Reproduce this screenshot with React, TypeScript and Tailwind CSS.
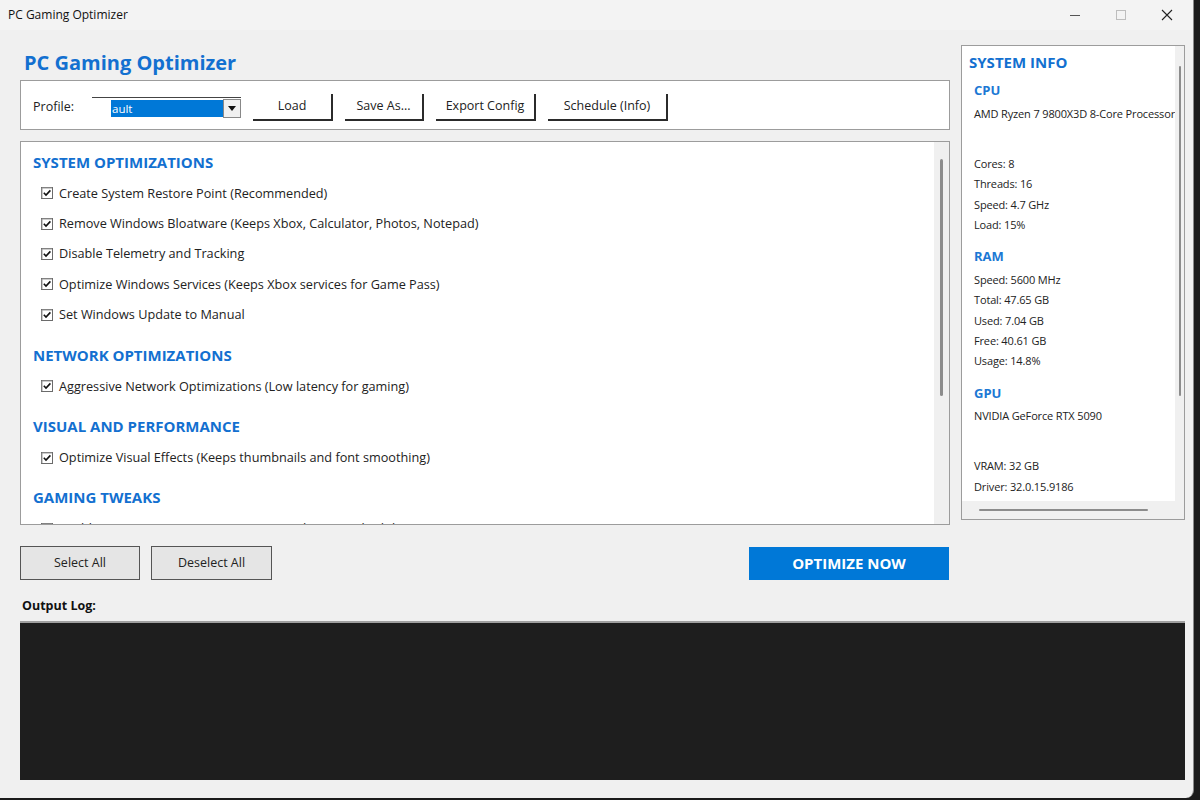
import React from "react";

const font = { fontFamily: '"Open Sans", "Noto Sans", sans-serif' };

type Section = { title: string; items: string[] };

const sections: Section[] = [
  {
    title: "SYSTEM OPTIMIZATIONS",
    items: [
      "Create System Restore Point (Recommended)",
      "Remove Windows Bloatware (Keeps Xbox, Calculator, Photos, Notepad)",
      "Disable Telemetry and Tracking",
      "Optimize Windows Services (Keeps Xbox services for Game Pass)",
      "Set Windows Update to Manual",
    ],
  },
  {
    title: "NETWORK OPTIMIZATIONS",
    items: ["Aggressive Network Optimizations (Low latency for gaming)"],
  },
  {
    title: "VISUAL AND PERFORMANCE",
    items: ["Optimize Visual Effects (Keeps thumbnails and font smoothing)"],
  },
  {
    title: "GAMING TWEAKS",
    items: ["Enable Gaming Optimizations (Game Mode, GPU scheduling, priority)"],
  },
];

function CheckBox({ checked = true }: { checked?: boolean }) {
  return (
    <svg width="12" height="12" viewBox="0 0 12 12" className="shrink-0">
      <rect x="0.5" y="0.5" width="11" height="11" fill="#fff" stroke="#6b6b6b" />
      <path d="M1 1 H11 M1 1 V11" stroke="#9a9a9a" />
      {checked && <path d="M2.8 5.8 L5 8.1 L9.4 3.4" fill="none" stroke="#111" strokeWidth="1.6" />}
    </svg>
  );
}

function ToolButton({ label, w }: { label: string; w: string }) {
  return (
    <button
      className={`${w} h-[27px] bg-white border-r-2 border-b-2 border-[#2b2b2b] text-[12.5px] text-[#222] flex items-center justify-center`}
    >
      {label}
    </button>
  );
}

function InfoHead({ children }: { children: React.ReactNode }) {
  return <div className="text-[13px] font-bold text-[#1c78d4] h-[20px] leading-[20px]">{children}</div>;
}

function InfoLine({ children }: { children?: React.ReactNode }) {
  return (
    <div className="text-[11px] tracking-[-0.15px] text-[#222] h-[20.3px] leading-[20px] whitespace-nowrap">
      {children}
    </div>
  );
}

export default function App() {
  return (
    <div className="w-[1200px] h-[800px] bg-[#1b1b1b] flex" style={font}>
      <div className="w-[1194px] h-[798px] bg-[#f0f0f0] rounded-br-lg flex flex-col border-r border-[#8a8a8a]">
        {/* title bar */}
        <div className="h-[30px] bg-[#f3f3f3] flex items-center pl-2">
          <span className="text-[12px] text-[#111]">PC Gaming Optimizer</span>
          <div className="ml-auto flex items-center h-full">
            <div className="w-[46px] h-full flex items-center justify-center">
              <div className="w-[10px] h-px bg-[#555]" />
            </div>
            <div className="w-[46px] h-full flex items-center justify-center">
              <div className="w-[10px] h-[10px] border border-[#bdbdbd]" />
            </div>
            <div className="w-[46px] h-full flex items-center justify-center mr-[3px]">
              <svg width="12" height="12" viewBox="0 0 12 12">
                <path d="M1 1 L11 11 M11 1 L1 11" stroke="#222" strokeWidth="1.1" />
              </svg>
            </div>
          </div>
        </div>

        <div className="pl-[20px] pt-[15px] flex flex-col">
          <div className="flex gap-[11px]">
            {/* left column */}
            <div className="w-[930px] flex flex-col">
              <div className="h-[35px] flex items-center pl-[4px]">
                <h1 className="text-[20px] font-bold text-[#1370d0] leading-none">PC Gaming Optimizer</h1>
              </div>
              <div className="h-[50px] bg-white border border-[#9c9c9c] flex items-center pl-[12px] pt-[5px] gap-[12px]">
                <span className="text-[12.5px] text-[#222] w-[47px]">Profile:</span>
                <div className="w-[149px] h-[21px] border-t border-[#444] flex items-center">
                  <div className="w-[19px]" />
                  <div className="flex-1 h-[17px] bg-[#0078d7] text-white text-[11.5px] leading-[17px] pl-px">ault</div>
                  <div className="w-[18px] h-[19px] border border-[#888] bg-[#f0f0f0] flex items-center justify-center">
                    <svg width="8" height="5" viewBox="0 0 8 5">
                      <path d="M0 0 H8 L4 5 Z" fill="#111" />
                    </svg>
                  </div>
                </div>
                <ToolButton label="Load" w="w-[80px]" />
                <ToolButton label="Save As..." w="w-[79px]" />
                <ToolButton label="Export Config" w="w-[100px]" />
                <ToolButton label="Schedule (Info)" w="w-[120px]" />
              </div>

              {/* options list */}
              <div className="mt-[11px] h-[384px] bg-white border border-[#9c9c9c] flex overflow-hidden">
                <div className="flex-1 pl-[12px] pt-[8px] overflow-hidden">
                  {sections.map((s, i) => (
                    <div key={s.title} className={i === 0 ? "" : "mt-[13px]"}>
                      <div className="h-[24px] flex items-center text-[15px] font-bold text-[#1370d0]">{s.title}</div>
                      {s.items.map((item, j) => (
                        <div key={item} className={`h-[30.4px] flex items-center gap-[6px] pl-[8px] ${j === 0 ? "mt-[4px]" : ""}`}>
                          <CheckBox checked={s.title !== "GAMING TWEAKS"} />
                          <span className="text-[12.7px] text-[#222] whitespace-nowrap">{item}</span>
                        </div>
                      ))}
                    </div>
                  ))}
                </div>
                <div className="w-[15px] bg-[#f0f0f0] flex justify-center pt-[17px]">
                  <div className="w-[3px] h-[237px] bg-[#8c8c8c] rounded-full" />
                </div>
              </div>
            </div>

            {/* system info */}
            <div className="w-[224px] h-[475px] bg-white border border-[#9c9c9c] flex flex-col overflow-hidden">
              <div className="flex flex-1 overflow-hidden">
                <div className="flex-1 overflow-hidden pl-[7px] pt-[5px]">
                  <div className="text-[15px] font-bold text-[#1370d0] h-[22px] leading-[22px]">SYSTEM INFO</div>
                  <div className="pl-[5px] pt-[7px]">
                    <InfoHead>CPU</InfoHead>
                    <div className="mt-[4px]">
                      <InfoLine>AMD Ryzen 7 9800X3D 8-Core Processor</InfoLine>
                      <div className="h-[29.7px]" />
                      <InfoLine>Cores: 8</InfoLine>
                      <InfoLine>Threads: 16</InfoLine>
                      <InfoLine>Speed: 4.7 GHz</InfoLine>
                      <InfoLine>Load: 15%</InfoLine>
                    </div>
                    <div className="mt-[11px]">
                      <InfoHead>RAM</InfoHead>
                    </div>
                    <div className="mt-[4px]">
                      <InfoLine>Speed: 5600 MHz</InfoLine>
                      <InfoLine>Total: 47.65 GB</InfoLine>
                      <InfoLine>Used: 7.04 GB</InfoLine>
                      <InfoLine>Free: 40.61 GB</InfoLine>
                      <InfoLine>Usage: 14.8%</InfoLine>
                    </div>
                    <div className="mt-[11px]">
                      <InfoHead>GPU</InfoHead>
                    </div>
                    <div className="mt-[3px]">
                      <InfoLine>NVIDIA GeForce RTX 5090</InfoLine>
                      <div className="h-[30.5px]" />
                      <InfoLine>VRAM: 32 GB</InfoLine>
                      <InfoLine>Driver: 32.0.15.9186</InfoLine>
                    </div>
                  </div>
                </div>
                <div className="w-[9px] bg-[#f0f0f0] flex justify-center pt-[20px]">
                  <div className="w-[2px] h-[330px] bg-[#8c8c8c] rounded-full" />
                </div>
              </div>
              <div className="h-[18px] bg-[#f0f0f0] flex items-center pl-[17px]">
                <div className="w-[169px] h-[2px] bg-[#8c8c8c] rounded-full" />
              </div>
            </div>
          </div>

          {/* action buttons */}
          <div className="w-[930px] mt-[21px] flex items-center">
            <button className="w-[120px] h-[34px] bg-[#e5e5e5] border border-[#555] text-[12.5px] text-[#222]">Select All</button>
            <button className="ml-[11px] w-[121px] h-[34px] bg-[#e5e5e5] border border-[#555] text-[12.5px] text-[#222]">Deselect All</button>
            <button className="ml-auto mr-px w-[200px] h-[33px] bg-[#0078d7] text-white text-[15px] font-bold">OPTIMIZE NOW</button>
          </div>

          <div className="mt-[15px] h-[22px] flex items-center pl-[2px] text-[12.5px] font-bold text-[#111]">Output Log:</div>
          <div className="mt-[4px] w-[1165px] h-[159px] bg-[#1e1e1e] border-t-2 border-[#a0a0a0]" />
        </div>
      </div>
      <div className="flex-1 bg-[#1b1b1b]" />
    </div>
  );
}
